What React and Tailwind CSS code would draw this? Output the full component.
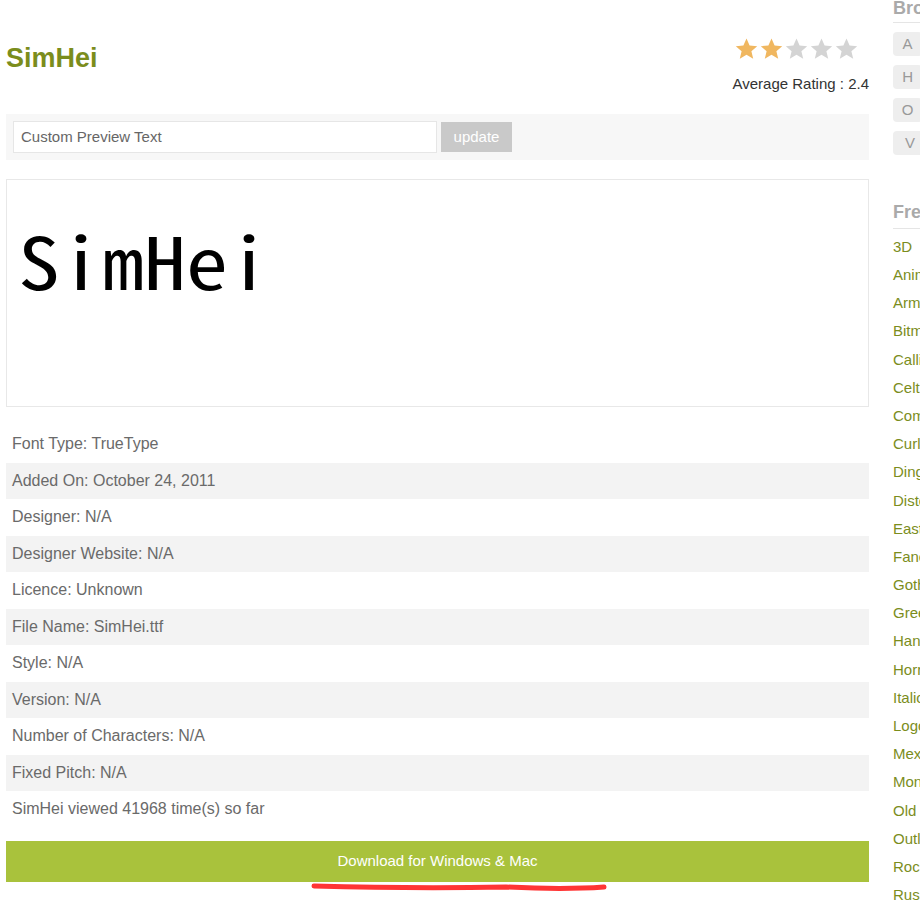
import React from "react";

const details = [
  "Font Type: TrueType",
  "Added On: October 24, 2011",
  "Designer: N/A",
  "Designer Website: N/A",
  "Licence: Unknown",
  "File Name: SimHei.ttf",
  "Style: N/A",
  "Version: N/A",
  "Number of Characters: N/A",
  "Fixed Pitch: N/A",
  "SimHei viewed 41968 time(s) so far",
];

const categories = [
  "3D", "Animated", "Army", "Bitmap", "Calligraphy", "Celtic", "Comic", "Curly",
  "Dingbats", "Distorted", "Eastern", "Fancy", "Gothic", "Greek", "Handwriting",
  "Horror", "Italic", "Logo", "Mexican", "Monospace", "Old School", "Outline",
  "Rock", "Russian", "Sans Serif",
];

const letterRows = [
  ["A", "B", "C", "D", "E", "F", "G"],
  ["H", "I", "J", "K", "L", "M", "N"],
  ["O", "P", "Q", "R", "S", "T", "U"],
  ["V", "W", "X", "Y", "Z"],
];

function Star({ filled }) {
  return (
    <svg width="25" height="24" viewBox="0 0 24 24">
      <path
        d="M12 1.5l3.1 7.1 7.6.6-5.8 5 1.8 7.5L12 17.7l-6.7 4 1.8-7.5-5.8-5 7.6-.6z"
        fill={filled ? "#f0b760" : "#d4d4d4"}
      />
    </svg>
  );
}

export default function App() {
  return (
    <div className="w-[920px] h-[906px] overflow-hidden bg-white font-['Liberation_Sans',Arial,sans-serif]">
      <div className="flex gap-6 pl-[6px]">
        {/* main column */}
        <div className="w-[863px] shrink-0">
          <div className="flex justify-between h-[114px]">
            <h1 className="pt-[40px] text-[27px] leading-[36px] font-bold text-[#7b8d1c]">SimHei</h1>
            <div className="pt-[37px] flex flex-col items-end">
              <div className="flex mr-[10px] -ml-[3px]">
                {[1, 2, 3, 4, 5].map((i) => (
                  <Star key={i} filled={i <= 2} />
                ))}
              </div>
              <div className="mt-[14px] text-[15px] leading-[18px] text-[#333]">Average Rating : 2.4</div>
            </div>
          </div>

          <div className="h-[46px] bg-[#f7f7f7] flex items-center pl-[7px] gap-[4px]">
            <div className="w-[424px] h-[32px] bg-white border border-[#e6e6e6] flex items-center pl-[7px] text-[15px] text-[#666]">
              Custom Preview Text
            </div>
            <button className="w-[71px] h-[30px] bg-[#c9c9c9] text-white text-[15px]">update</button>
          </div>

          <div className="mt-[19px] h-[228px] border border-[#e8e8e8] pl-[11px] pt-[40px]">
            <div className="text-[84px] leading-[90px] text-black font-['Noto_Sans_Mono_CJK_SC','DejaVu_Sans_Mono',monospace] scale-y-[0.86] origin-top">
              SimHei
            </div>
          </div>

          <div className="mt-[19px]">
            {details.map((d, i) => (
              <div
                key={d}
                className={`h-[36.5px] flex items-center pl-[6px] text-[16px] text-[#6a6a6a] ${i % 2 === 1 ? "bg-[#f3f3f3]" : ""}`}
              >
                {d}
              </div>
            ))}
          </div>

          <div className="relative mt-[13px]">
            <button className="w-full h-[41px] bg-[#a9c23c] text-white text-[15px]">Download for Windows &amp; Mac</button>
            <svg className="absolute left-[300px] top-[40px]" width="305" height="14" viewBox="0 0 305 14">
              <path
                d="M8 5 C80 7, 150 7, 200 6 C240 8, 270 8, 298 6"
                stroke="#ff3535"
                strokeWidth="5"
                strokeLinecap="round"
                fill="none"
              />
            </svg>
          </div>
        </div>

        {/* sidebar */}
        <div className="w-[240px] shrink-0">
          <div className="text-[18px] font-bold leading-[18px] text-[#aaa] -mt-[1px]">Browse by Alphabet</div>
          <div className="mt-[5px] border-t border-[#e5e5e5]" />
          <div className="mt-[9px] flex flex-col gap-[9px]">
            {letterRows.map((row) => (
              <div key={row[0]} className="flex gap-[6px]">
                {row.map((l) => (
                  <div key={l} className="w-[34px] h-[24px] rounded-[4px] bg-[#eee] text-[#999] text-[15px] flex items-center justify-center">
                    {l}
                  </div>
                ))}
              </div>
            ))}
          </div>
          <div className="mt-[46px] text-[18px] font-bold leading-[22px] text-[#aaa]">Free Fonts Categories</div>
          <div className="mt-[5px] border-t border-[#e5e5e5]" />
          <div className="mt-[4px]">
            {categories.map((c) => (
              <div key={c} className="h-[28.2px] flex items-center text-[15px] text-[#7b8d1c]">
                {c}
              </div>
            ))}
          </div>
        </div>
      </div>
    </div>
  );
}
